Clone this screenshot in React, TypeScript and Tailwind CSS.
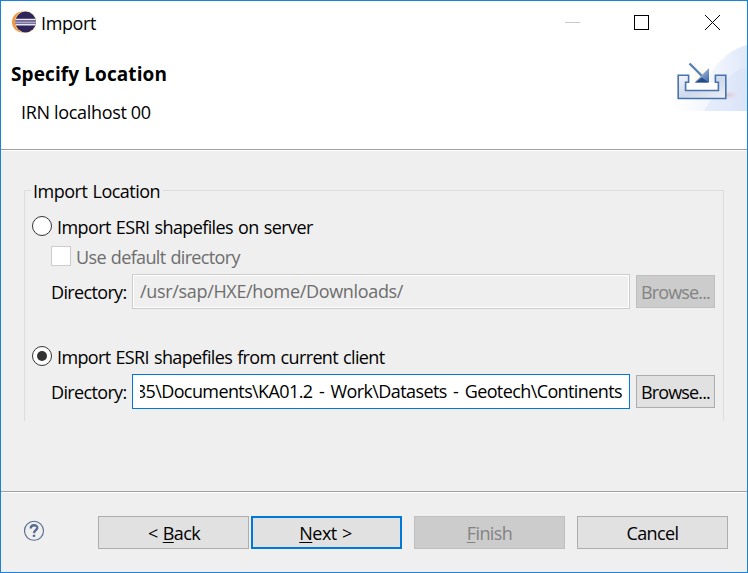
import type { ReactNode } from 'react';

function EclipseIcon() {
  return (
    <svg className="mt-[10px] h-6 w-[25px] shrink-0" viewBox="0 0 25 24">
      <circle cx="11.6" cy="11" r="10.6" fill="#f3963a" />
      <circle cx="14.600" cy="11" r="10.800" fill="#fbd9b0" />
      <circle cx="14.600" cy="11" r="10.400" fill="#2f2558" />
      <path d="M4.700 8.500h20M4.200 11.100h20.800M4.700 13.700h20" stroke="#e6e5f0" strokeWidth="1.400" />
      <path d="M4.500 9.800h20.400M4.500 12.400h20.400" stroke="#78719f" strokeWidth="1.200" />
    </svg>
  );
}

function ImportBanner() {
  return (
    <svg className="h-[66px] w-[79px] shrink-0" viewBox="0 0 79 66">
      <defs>
        <linearGradient id="sky" x1="0" y1="0" x2="1" y2="0">
          <stop offset="0.1" stopColor="#fff" />
          <stop offset="0.7" stopColor="#edf2fc" />
          <stop offset="1" stopColor="#dfe8f9" />
        </linearGradient>
        <linearGradient id="tray" x1="0" y1="0" x2="1" y2="1">
          <stop offset="0" stopColor="#f4f6fb" />
          <stop offset="0.5" stopColor="#cfd9ea" />
          <stop offset="1" stopColor="#eef0f7" />
        </linearGradient>
        <linearGradient id="head" x1="0" y1="0" x2="1" y2="1">
          <stop offset="0.2" stopColor="#b4cae6" />
          <stop offset="1" stopColor="#3a63a2" />
        </linearGradient>
        <radialGradient id="shade">
          <stop offset="0" stopColor="#d9c6d6" />
          <stop offset="1" stopColor="#e8e4f0" stopOpacity="0" />
        </radialGradient>
      </defs>
      <path d="M79 0C60 5 51 17 41 30C31 44 15 57 0 66H79Z" fill="url(#sky)" />
      <path d="M79 22C61 26 51 43 36 66H79Z" fill="#d3dff7" opacity=".4" />
      <ellipse cx="60" cy="50" rx="14" ry="5" fill="url(#shade)" />
      <path d="M17.500 37H51V45H17.500Z" fill="#fff" />
      <circle cx="33" cy="31" r="7" fill="#fbfaea" opacity=".8" />
      <path d="M10.200 30.200H20.600V37.200H17.600V45.500H50.400V37.200H47.400V30.200H57.800V53.500H10.200Z" fill="url(#tray)" stroke="#4673ae" strokeWidth="1.600" />
      <path d="M21.500 18.500L34 31" stroke="#5780b8" strokeWidth="2.400" />
      <path d="M41 23V37.500H26.500Z" fill="url(#head)" />
      <path d="M34 32.500L40.500 37.500H27Z" fill="#244c8b" />
    </svg>
  );
}

function Radio({ checked = false }: { checked?: boolean }) {
  return (
    <span className="flex size-5 shrink-0 items-center justify-center rounded-full border border-[#333] bg-white">
      {checked && <span className="size-[10px] rounded-full bg-[#333]" />}
    </span>
  );
}

function Separator() {
  return <div className="h-[2px] shrink-0 border-t border-[#a0a0a0] bg-white" />;
}

function DirectoryRow({ disabled = false, children }: { disabled?: boolean; children: ReactNode }) {
  return (
    <div className="flex h-[35px] pl-[26px]">
      <span className="w-[81px] shrink-0 pt-[6px] tracking-[-0.65px]">Directory:</span>
      <div
        className={
          disabled
            ? 'flex h-[35px] w-[498px] border border-[#ccc] p-px text-[#6d6d6d] shadow-[inset_0_0_0_1px_#fff]'
            : 'flex h-[35px] w-[498px] border border-[#0078d7] bg-white p-px'
        }
      >
        <div
          className={
            disabled
              ? 'ml-[6px] pt-[3px] tracking-[-0.33px]'
              : 'mx-[6px] flex w-[482px] justify-end overflow-hidden pt-[3px] tracking-[-0.6px] [word-spacing:2.3px]'
          }
        >
          {children}
        </div>
      </div>
      <button
        className={
          disabled
            ? 'mt-px ml-[6px] h-[33px] w-[79px] border border-[#bfbfbf] bg-[#ccc] tracking-[-0.85px] text-[#838383]'
            : 'mt-px ml-[6px] h-[33px] w-[79px] border border-[#adadad] bg-[#e1e1e1] tracking-[-0.85px]'
        }
      >
        Browse...
      </button>
    </div>
  );
}

function Mnemonic({ children }: { children: ReactNode }) {
  return <span className="underline decoration-1 underline-offset-[2px]">{children}</span>;
}

export default function App() {
  return (
    <div className="flex h-[573px] w-[748px] flex-col overflow-hidden border border-[#1a82d8] bg-[#efefef] font-['Open_Sans','Noto_Sans',sans-serif] text-[18px] leading-6 whitespace-nowrap text-black">
      <header className="flex h-[148px] shrink-0 flex-col bg-white">
        <div className="flex h-[44px] shrink-0 pl-[10px]">
          <EclipseIcon />
          <span className="mt-[10px] ml-[5px] tracking-[-0.4px]">Import</span>
          <svg className="ml-auto h-[44px] w-[182px]" viewBox="0 0 182 44" shapeRendering="crispEdges">
            <path d="M0 21.5h15" stroke="#c8c8c8" />
            <path d="M69.500 14.500h14v14h-14z" fill="none" stroke="#000" />
            <path d="M140 14l15 15M155 14l-15 15" stroke="#000" shapeRendering="auto" />
          </svg>
        </div>
        <div className="flex justify-between">
          <div className="pl-[10px]">
            <h1 className="mt-[17px] text-[19px] leading-6 font-bold tracking-[0.1px]">Specify Location</h1>
            <p className="mt-[14px] pl-[10px] tracking-[-0.33px]">IRN localhost 00</p>
          </div>
          <ImportBanner />
        </div>
      </header>
      <Separator />

      <main className="h-[340px] shrink-0 pt-[28px] pl-[23px]">
        <div className="flex h-6 w-[700px] items-center">
          <div className="h-[13px] w-[7px] self-end border-t border-l border-[#dcdcdc]" />
          <span className="w-[132px] pl-[2px] tracking-[-0.5px] [word-spacing:1px]">Import Location</span>
          <div className="h-[13px] grow self-end border-t border-r border-[#dcdcdc]" />
        </div>
        <div className="h-[218px] w-[700px] border-x border-[#dcdcdc] pl-[7px]">
          <div className="flex h-[43px] pt-[13px]">
            <Radio />
            <span className="-mt-px pl-[5px] tracking-[-0.6px] [word-spacing:1px]">Import ESRI shapefiles on server</span>
          </div>
          <div className="flex h-[28px] pl-[19px]">
            <span className="size-5 border border-[#ccc] bg-white" />
            <span className="-mt-px pl-[5px] tracking-[-0.66px] [word-spacing:1px] text-[#6d6d6d]">Use default directory</span>
          </div>
          <div className="-ml-[7px]">
            <DirectoryRow disabled>/usr/sap/HXE/home/Downloads/</DirectoryRow>
          </div>
          <div className="flex h-[65px] pt-[37px]">
            <Radio checked />
            <span className="-mt-px pl-[5px] tracking-[-0.64px] [word-spacing:1px]">Import ESRI shapefiles from current client</span>
          </div>
          <div className="-ml-[7px]">
            <DirectoryRow>85\Documents\KA01.2 - Work\Datasets - Geotech\Continents</DirectoryRow>
          </div>
        </div>
      </main>
      <Separator />

      <footer className="flex grow pt-[23px] pl-[22px]">
        <svg className="mt-[4px] ml-px size-[21px]" viewBox="0 0 21 21" fill="none" stroke="#536b91">
          <circle cx="10" cy="10.800" r="9.500" strokeWidth="1.100" />
          <path d="M6.700 8.500C6.700 4.200 13.500 4.300 13.300 7.900C13.100 10.100 10.100 10.100 10 13.100" strokeWidth="2.300" />
          <path d="M8.800 15.800h2.400" strokeWidth="2.200" />
        </svg>
        <button className="ml-[53px] h-[33px] w-[151px] border border-[#adadad] bg-[#e1e1e1] pl-px tracking-[-0.6px] [word-spacing:1px]">&lt; <Mnemonic>B</Mnemonic>ack</button>
        <button className="ml-[2px] h-[33px] w-[151px] border-2 border-[#0078d7] bg-[#e1e1e1] pr-[2px] tracking-[-0.5px] [word-spacing:1px]"><Mnemonic>N</Mnemonic>ext &gt;</button>
        <button className="ml-[12px] h-[33px] w-[151px] border border-[#bfbfbf] bg-[#ccc] tracking-[-0.6px] text-[#838383]"><Mnemonic>F</Mnemonic>inish</button>
        <button className="ml-[12px] h-[33px] w-[151px] border border-[#adadad] bg-[#e1e1e1] tracking-[-0.6px]">Cancel</button>
      </footer>
    </div>
  );
}
